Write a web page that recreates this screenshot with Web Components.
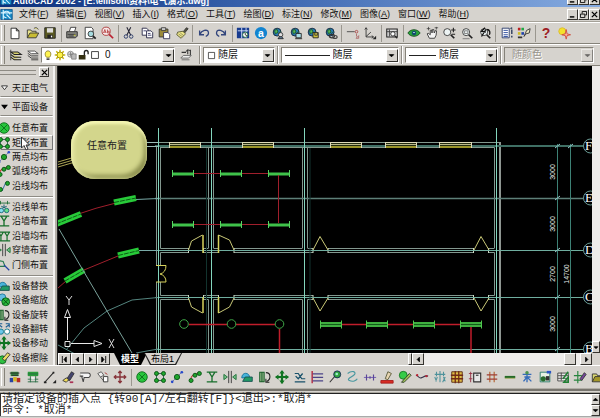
<!DOCTYPE html>
<html lang="zh-CN">
<head>
<meta charset="utf-8">
<title>AutoCAD 2002</title>
<style>
html, body { margin: 0; height: 100%; }
body { font: 9px/12px "Liberation Sans", "Noto Sans CJK SC", sans-serif; color: #111; background: #d6d3ce; overflow: hidden;
  --face: #d6d3ce; --light: #fff; --shade: #858279; --dark: #35332f; }
</style>
</head>
<body>
<cad-app></cad-app>
<script>
const G = '#1fa52c', DG = '#064f12';
const dot = (x, y, r = 2.3) => `<circle cx="${x}" cy="${y}" r="${r}" fill="${G}" stroke="${DG}"/>`;
const path = (d, c = '#222', w = 1, f = 'none') => `<path d="${d}" stroke="${c}" stroke-width="${w}" fill="${f}"/>`;
const globe = '<circle cx="7" cy="7" r="4.5" fill="#2878b8" stroke="#123"/>' + path('M4 5l3-1 1 3-3 2zM8 9l3-3', '#1c5b2b', 1, '#58b858');
const lens = '<circle cx="7" cy="7" r="4" fill="#edf4f4" stroke="#333"/>' + path('M10 10l4 4', '#222', 2);
const ICONS = {
  app: '<rect x="1" y="2" width="14" height="12" fill="#1688c4" stroke="#0a4e88"/>' + path('M4 2v12M1 6h14M8 12a4 4 0 1 1 4-4M8 8l5 5', '#d8f4ff', 1.4),
  new: path('M3.5 2.5h6l3 3v9h-9zM9.500 2.500v3h3', '#222', 1, '#fff'),
  open: path('M1.500 13.500v-9h4l1 1.500h5v2M9 3c2-2 4-1 5 1', '#333', 1, '#e9e38c') + path('M1.500 13.500l3-5.500h10l-3 5.500z', '#333', 1, '#c8bc34'),
  save: path('M2 2h12v12H2z', '#222', 1, '#5b5a22') + '<path d="M4.500 2.500h7v5h-7z" fill="#dedede"/><path d="M5 10h6v4H5z" fill="#222"/><path d="M9 11h1.500v2H9z" fill="#fff"/>',
  print: path('M5 6l1.500-4.500h6L11 6', '#333', 1, '#fff') + path('M2 6.500h12v5l-2 2H2z', '#222', 1, '#8c8c86') + path('M3 9.500h9M4 11.500h6', '#333') + '<path d="M10 10h2v1h-2z" fill="#dd2"/>',
  preview: path('M2.500 1.500h7l2 2v11h-9z', '#333', 1, '#fff') + '<circle cx="9" cy="9" r="3.200" fill="#a7dce0" stroke="#333"/>' + path('M11.500 11.500l3 3', '#222', 2),
  find: '<circle cx="7" cy="6" r="4.700" fill="#f7eaea" stroke="#a33"/>' + path('M4 8l1.500-4L7 8M4.500 7h2M8.500 4v4M8.500 6h2v2h-2', '#a22', .8) + path('M10.500 9.500l4.500 4.500', '#b23', 2),
  cut: path('M5.500 1.500l4.500 9M10 1.500l-4.500 9', '#223', 1.200) + '<circle cx="4.500" cy="12" r="2" fill="none" stroke="#236"/><circle cx="10.500" cy="12" r="2" fill="none" stroke="#236"/>',
  copy: path('M2.500 2.500h5l2 2v6h-7z', '#224', 1, '#fff') + path('M7.500 5.500h5l2 2v6h-7z', '#224', 1, '#fff') + path('M9 8.500h3M9 10.500h4M4 5.500h3', '#336'),
  paste: path('M2.500 3.500h10v9h-10z', '#333', 1, '#9a8a3a') + path('M5 2h5v3H5z', '#333', 1, '#ddd') + path('M7.500 7.500h5l2 2v5h-7z', '#335', 1, '#fff'),
  brush: path('M9 7l4-5 2 1-4 5z', '#333', 1, '#554') + path('M3 7l6-1 3 3-5 5-5-4z', '#553', 1, '#eee788') + path('M4 9l4 3M6 8l4 3', '#775', .8),
  undo: path('M3 5v5h5M3.500 9.500C5 5 12 3 13 7c.5 2-1 4-3 5', '#33467d', 1.500),
  redo: path('M13 5v5H8M12.500 9.500C11 5 4 3 3 7c-.5 2 1 4 3 5', '#33467d', 1.500),
  today: '<path d="M1 2h14v12H1z" fill="#183c90"/>' + path('M2 5.500h12M6.500 2v12M11.500 2v12', '#dce8ff') + '<circle cx="10.500" cy="10" r="3" fill="#fff" stroke="#1b6a3b"/>' + path('M10.500 8v2l2 1', '#222'),
  point: '<circle cx="8" cy="8" r="7" fill="#1284d0"/><text x="8" y="12" text-anchor="middle" font-size="12" font-weight="bold" fill="#fff" font-family="Liberation Sans, sans-serif">a</text>',
  meet: globe + '<circle cx="11" cy="10" r="2.500" fill="#ddd" stroke="#333"/>' + path('M8 14.500c1-3 5-3 6 0z', '#222', 1, '#68a'),
  publish: globe + path('M8 8.500h6v5H8z', '#222', 1, '#a9dce5') + path('M7 14.500h8', '#222'),
  etrans: globe + path('M8 7.500h6v6H8z', '#222', 1, '#cfc23a') + path('M10 8v2.500h3V8', '#333'),
  link: globe + '<ellipse cx="9" cy="11.500" rx="3" ry="2" fill="none" stroke="#333" stroke-width="1.300"/><ellipse cx="12.500" cy="12.500" rx="2.500" ry="1.700" fill="none" stroke="#444" stroke-width="1.300"/>',
  track: path('M1 6.500h9', '#444', 1, 'none') + '<circle cx="12" cy="6.500" r="1.500" fill="none" stroke="#a44"/>' + path('M12 9v3M14.500 11v3h-3z', '#a66', 1),
  ucs: path('M3.500 2v10.500H12M3.500 12L9 7M2 4l1.500-2L5 4M10 11l2 1.500L10 14', '#333') + '<path d="M15 11v4h-4z" fill="#222"/>',
  views: path('M2 3.500h12v9H2z', '#222', 1.200, '#ddd') + path('M2 6.500h12M5 4v8', '#333') + '<circle cx="9" cy="9" r="2.500" fill="#fff" stroke="#222"/>' + path('M11 11l3 3', '#222', 1.500),
  orbit: path('M1 8c3-5 11-5 14 0-3 5-11 5-14 0z', '#154d1c', 1, '#28a23a') + '<circle cx="8" cy="8" r="2.500" fill="#134a70"/><path d="M7 7h2v1H7z" fill="#dff"/>',
  pan: path('M5 14L2.500 9l1-1L6 10V5l1.500-.5L8 8l.500-4H10l.500 4L12 5l1.200.5-.5 5L11 14z', '#333', 1, '#f4f4f4') + path('M2 3h4M11 2h4M4 1v4M13 1v3', '#333', .8),
  zoomrt: lens.replace('cx="7"', 'cx="6"') + path('M13 2v5M10.500 4.500h5M11 9.500h4', '#222', 1.200),
  zoomwin: lens + path('M5 5.500h4v3H5zM3 14.500h8', '#777'),
  zoomprev: lens + path('M4 12l5-8M8 2l-4 4 5 1M10 4c4 0 4 4 3 6', '#111', 1.500),
  props: path('M2.500 2.500h8v11h-8z', '#236', 1, '#fff') + path('M4 5h5M4 7.500h5M4 10h5M4 12h5', '#249', 1, 'none') + path('M13.500 4v5M13.500 11v2M12 3l2-1', '#235', 1.500),
  design: '<path d="M1 2h3v3H1z" fill="#b22"/><path d="M5 2h3v3H5z" fill="#2a4"/><path d="M1 7h3v3H1z" fill="#cb2"/><path d="M5 7h3v3H5z" fill="#24a"/><path d="M1 12h5v2H1z" fill="#333"/>' + path('M8 12l3-7 4-2-1 5-4 1z', '#333', 1, '#e9e6c4'),
  help: '<text x="8" y="14" text-anchor="middle" font-size="16" font-weight="bold" fill="#9d1c24" font-family="Liberation Sans, sans-serif">?</text>',
  spark: '<circle cx="6" cy="6" r="4" fill="#f4e22a" stroke="#d8b830"/>' + path('M10.500 4l1 5 4 1-4 1-1 4-1-4-4-1 4-1z', '#cf4b3c', 1, '#ffb098'),
  layers: path('M2 4.500h8l4 3H6zM2 7.500l4 3h8M2 10.500l4 3h8', '#222', 1.200, '#d7d06d') + path('M2 2v12', '#333'),
  layerprev: path('M2 3.500h8l4 3H6z', '#444', 1, '#fff') + path('M2 6l4 3h8M2 8.500l4 3h8M6 13.500h8', '#333'),
  makelayer: path('M2 11.500l3-3h9l-3 3zM3 13.500h9', '#666', 1, '#eee') + path('M3 5h5M10 7V2M8 4l2-2 3 1M13 2v6', '#333', 1.200),
  bulb: path('M6 11C3 8 4 2.500 8 2.500S13 8 10 11z', '#776a14', 1, '#fff451') + path('M6 13.500h4', '#333', 2),
  sun: path('M8 1v14M1 8h14M3 3l10 10M13 3L3 13', '#cab60e', 2) + '<circle cx="8" cy="8" r="4" fill="#fff34a" stroke="#8b7b00"/>',
  freeze: '<circle cx="6" cy="7" r="4" fill="#ddd" stroke="#777"/><path d="M7.500 6.500h6v7h-6z" fill="#bbb" stroke="#777"/>' + path('M6 4v6M3 7h6', '#777'),
  unlock: path('M8.500 8V4.500a2.500 2.500 0 0 1 5 0V7', '#222', 1.800) + '<path d="M1 8h9v6H1z" fill="#332f12"/>',
  square: path('M2.500 2.500h11v11h-11z', '#222', 1.300, '#fff'),
  equip: '<path d="M3 2h9v5H3z" fill="#398c45"/><path d="M2 9h4v5H2z" fill="#2743a2"/><path d="M6 8h4v5H6z" fill="#d5b724"/><path d="M10 9h4v5h-4z" fill="#b62a25"/>' + path('M2 3.500h11M4 6h8', '#222'),
  table: '<path d="M2 2h12v5H2z" fill="#2b9c3b"/>' + path('M2 4.500h12M2 10.500h12M2 13.500h12M5 7v7M11 7v7', '#276c43') + '<path d="M6 8h4v3H6z" fill="#eee"/>',
  line: path('M2 14L12 3', '#222', 1.200) + '<path d="M1 13h3v2H1zM11 2h2v2h-2z" fill="#222"/><path d="M15 11v4h-4z" fill="#222"/>',
  eraser: path('M6 11l6-9 3 2-5 8z', '#333', 1, '#44446e') + path('M2 12l4-3 3 2-3 3z', '#333', 1, '#f1dc59') + '<path d="M10 13h4v2h-4z" fill="#a35"/>',
  flag: path('M2.500 3.500h9c4 0 3 6-1 5H7l-1 5-2-7M2 7h4', '#444', 1.200, '#f5f5f5'),
  move2: path('M2 4l4-2 3 4-4 2zM5 8l5 6', '#555', 1, '#eee') + path('M8.500 7.500h5v6h-5z', '#333', 1, '#fff') + path('M10 3l3 2', '#a33'),
  movered: path('M8 1.500v13M1.500 8h13M6 3.500l2-2 2 2M6 12.500l2 2 2-2M3.500 6l-2 2 2 2M12.500 6l2 2-2 2', '#87343a', 1.600),
  any: '<circle cx="8" cy="8" r="6" fill="#27c53c" stroke="#0b6a1a"/>' + path('M4 4l8 8M12 4l-8 8', '#0b6a1a'),
  rect: path('M4 4h8v8H4z', '#254') + dot(4, 4) + dot(12, 4) + dot(4, 12) + dot(12, 12),
  two: path('M3 13L13 3', '#67a', 1, 'none') + dot(8, 8, 3) + '<circle cx="13.500" cy="2.500" r="1.500" fill="#2547cb"/><circle cx="2.500" cy="13.500" r="1.500" fill="#2547cb"/>',
  arc: path('M3 12C3 6 8 4 13 4', '#b93830', 1.300) + dot(3.500, 12) + dot(8, 6) + dot(13, 4),
  along: path('M2 13h4l4-9h4', '#467aa5', 1.200) + dot(4, 12) + dot(12, 5),
  single: path('M1 3.500h14M4 1v4M12 1v4', '#1d6b35') + path('M8 5v4M5 7l3 2 3-2', '#267', 1.200) + '<circle cx="5" cy="12" r="2.500" fill="#8de" stroke="#167"/><circle cx="11" cy="12" r="2.500" fill="#6d8" stroke="#167"/>',
  wall: path('M2 2.500h12M5 3l3 5 3-5M8 8v5M2 13.500h12', '#166f2b', 1.500),
  wallavg: path('M1 3.500h14M2 4l2.500 4L7 4M9 4l2.500 4L14 4M4.500 8v5M11.500 8v5M1 13.500h14', '#166f2b', 1.400),
  through: path('M6.500 1v14M9.500 1v14', '#333') + path('M1 5l4 3-4 3zM15 5l-4 3 4 3z', '#176e32', 1, '#7ac18b'),
  door: path('M2 3l5 1 2 5M1 9.500h8', '#277b50', 1.300) + path('M8 8l6 6', '#2342a4', 1.500),
  replace: path('M2 9c0-7 9-7 9 0z', '#157199', 1, '#48b4da') + path('M6 8h8v5H3z', '#174e50', 1, '#219b66'),
  scale: '<circle cx="6" cy="5" r="4" fill="#62bce2" stroke="#16759b"/><circle cx="10" cy="10" r="4.500" fill="#27b53a" stroke="#095918"/>' + path('M7 7l6 6M13 7l-6 6', DG),
  rotate: path('M2 2.500h5v11H2zM4.500 3v10', '#155c27', 1.200, '#9bbd90') + path('M9 3c6 0 6 8 1 10M9 10v4h4', '#222', 1.200),
  flip: path('M2 3l4 3M2 6V2h4M14 3l-4 3M14 6V2h-4', '#1d5f94', 1.300) + '<circle cx="4.500" cy="11" r="3" fill="#6bc7ea" stroke="#178"/><circle cx="11.500" cy="11" r="3" fill="#fff" stroke="#178"/>',
  move: path('M8 1v14M1 8h14', '#107422', 2.500) + '<path d="M5 4l3-4 3 4zM5 12l3 4 3-4zM4 5L0 8l4 3zM12 5l4 3-4 3z" fill="#107422"/>',
  wipe: '<circle cx="6" cy="10" r="4.500" fill="#2fc042" stroke="#0b6119"/>' + path('M6 9l6-7 3 2-6 7z', '#333', 1, '#e8da63'),
  lift: path('M2 13.500h12M2 4h4l4 6h4M3 7l3 3 5-6', '#17506a', 1.400),
  bus: path('M2.500 1v14', '#b83246', 1.700) + path('M3 4.500h12M3 8.500h12M3 12.500h12', '#4b4488', 1.300),
  pin: path('M2 14l6-7', '#333', 1.200) + '<circle cx="10.500" cy="5" r="4" fill="#30a43d" stroke="#125"/><circle cx="10" cy="4.500" r="1.500" fill="#9ec"/>',
  wave: path('M3 4c5-4 10-2 8 1S1 10 5 12s8 0 9-2', '#4998a0', 1.300),
  cross: path('M1 8.500h14', '#7a65b4', 1.200) + path('M4 5v7M12 5v7M8 7v3', '#5a4698', 1.300),
  pen: path('M1 12h14v3H1z', '#a71b1b', 1, '#d82c23') + path('M6 10l3-8 4 2-4 7z', '#553', 1, '#e6d3b0'),
  edit: '<circle cx="6" cy="6" r="4.500" fill="#35cc48" stroke="#187524"/>' + path('M4 14l9-10 2 2L7 14z', '#2d3c28', 1, '#a3c659'),
  wire: path('M1 6c3 0 3 4 6 3s4-3 8-2', '#343048', 1.300) + '<circle cx="2.500" cy="6" r="1.300" fill="#b23"/><circle cx="13" cy="7" r="1.300" fill="#b23"/>',
  tree: path('M2 5h12M4 2v5M8 1v13M12 2v5M2 8l2 5M5 8l-2 5M12 8l2 5M14 8l-3 6', '#4f929b', 1.200),
  grid: '<path d="M2 2h12v12H2z" fill="#e0bc45" stroke="#54270e"/>' + path('M6 1v14M10 1v14M1 6h14M1 10h14', '#712b15', 1.500),
  panel: path('M1 4h4M3 2v12M1 10h4', '#963044') + path('M6.500 3.500h8v10h-8z', '#333', 1.300, '#e8e8e8') + path('M9 6h3', '#333', 1.300),
  hash: path('M5.500 2v12M10.500 2v12', '#b6693a', 1.400) + path('M2 5.500h12M2 10.500h12', '#a03f36', 1.400),
  dash: path('M2 8h12', '#256b26', 2.500) + path('M2 9.500h12', '#a5ac62'),
  person: path('M8 2v12M3 5h10M5 8h7M4 13l4-5 5 5', '#356bba', 1.500) + '<circle cx="8" cy="3" r="2" fill="#4d944e"/>',
  pic: path('M2.500 2.500h11v11h-11z', '#276', 1, '#e7f2e4') + '<circle cx="6" cy="10" r="3" fill="#286c2e"/><path d="M9 7h4v5H9z" fill="#333"/><path d="M10 1h5v3h-5z" fill="#2b55c5"/>',
  sheet: path('M2 3.500h12v9H2zM2 6.500h12M2 9.500h12M6 3v9', '#444', 1, '#e8e8e8') + path('M8 10l6-8M9 14h5V8z', '#208033', 1.700),
  mark: path('M5.500 1v14M1 6.500h9M1 11.500h9', '#27843e', 1.300) + path('M8 10l5-7 2 2-5 7z', '#333', 1, '#75469b'),
  folder: path('M1.500 13.500v-9h5l1 2h6', '#333', 1, '#d9d570') + path('M1.500 13.500l3-6h11l-3 6z', '#333', 1, '#a39628')
};

function define(name, html, setup) {
  const tpl = document.createElement('template');
  tpl.innerHTML = html;
  customElements.define(name, class extends HTMLElement {
    connectedCallback() {
      if (this.shadowRoot) return;
      const root = this.attachShadow({ mode: 'open' });
      root.append(tpl.content.cloneNode(true));
      if (setup) setup(this, root);
    }
  });
}

define('cad-icon', `<style>:host{display:block;flex:none;width:var(--size,14px);height:var(--size,14px)}svg{display:block;width:100%;height:100%}</style><svg viewBox="0 0 16 16" aria-hidden="true"></svg>`,
  (el, root) => { root.querySelector('svg').innerHTML = ICONS[el.getAttribute('name')]; });

define('cad-button', `<style>:host{display:block;flex:none}
button{display:flex;box-sizing:border-box;width:100%;height:100%;margin:0;padding:0;align-items:center;justify-content:center;border:1px solid;border-color:var(--light) var(--dark) var(--dark) var(--light);background:var(--face);color:#000}
svg{display:block;width:7px;height:7px}</style><button><svg viewBox="0 0 8 8"><path fill="none" stroke="#000"/></svg></button>`,
  (el, root) => {
    const shapes = {
      left: 'M5 1.500L2.500 4 5 6.500z', right: 'M3 1.500L5.500 4 3 6.500z', up: 'M1.500 5L4 2.500 6.500 5z', down: 'M1.500 3L4 5.500 6.500 3z',
      first: 'M1.500 0v8M6 1L3.500 4 6 7z', last: 'M6.500 0v8M2 1l2.500 3L2 7z', min: 'M1 6.500h5M1 7h5', restore: 'M2.500 3V.5h5v4H6M.5 3.500h5v4h-5z', close: 'M1 1l6 6M7 1L1 7'
    };
    const k = el.getAttribute('kind'), p = root.querySelector('path');
    if (shapes[k]) p.setAttribute('d', shapes[k]);
    if (['left', 'right', 'up', 'down', 'first', 'last'].includes(k)) p.setAttribute('fill', '#000');
    if (k === 'close') p.setAttribute('stroke-width', '1.5');
    root.querySelector('button').setAttribute('aria-label', k);
  });

define('cad-title', `<style>:host{display:flex;align-items:flex-end;height:7px;overflow:hidden;flex:none;background:linear-gradient(90deg,#0c2f7c,#3c66b0 45%,#86abe0);color:#fff}
cad-icon{--size:12px;margin-bottom:1px}
h1{margin:0 auto 0 1px;font:bold 9px/12px "Liberation Sans","Noto Sans CJK SC",sans-serif;white-space:nowrap}
cad-button{width:11px;height:11px;margin-bottom:2px}</style>
<cad-icon name="app"></cad-icon><h1>AutoCAD 2002 - [E:\\ellison\\资料\\电气演示.dwg]</h1>
<cad-button kind="min"></cad-button><cad-button kind="restore"></cad-button><cad-button kind="close"></cad-button>`);

define('cad-menu', `<style>:host{display:flex;align-items:center;box-sizing:border-box;height:15px;flex:none;border-bottom:1px solid #a5a198}
cad-icon{--size:13px}
nav{display:flex;gap:8px;margin:0 auto 0 6px}
button{border:0;padding:0;margin:0;background:none;font:inherit;color:inherit;white-space:nowrap}
cad-button{width:11px;height:11px}</style><cad-icon name="app"></cad-icon><nav></nav>
<cad-button kind="min"></cad-button><cad-button kind="restore"></cad-button><cad-button kind="close"></cad-button>`,
  (el, root) => {
    root.querySelector('nav').innerHTML = '文件F 编辑E 视图V 插入I 格式O 工具T 绘图D 标注N 修改M 图像A 窗口W 帮助H'.split(' ')
      .map(s => `<button>${s.slice(0, 2)}(<u>${s[2]}</u>)</button>`).join('');
  });

define('cad-toolbar', `<style>:host{display:flex;align-items:center;box-sizing:border-box;flex:none;height:22px;border-top:1px solid var(--light);border-bottom:1px solid var(--shade);padding-left:1px;overflow:hidden}
.grip{flex:none;width:2px;align-self:stretch;margin:2px 2px 2px 0;border-left:1px solid var(--light);border-right:1px solid var(--shade)}
.row{display:flex;flex:1;align-items:center;justify-content:space-between;margin-right:var(--end,0)}
button{display:flex;justify-content:center;width:16px;flex:none;border:0;padding:0;background:none}
i{flex:none;width:1px;height:17px;margin:0 1px;background:#9a978f}</style><span class="grip"></span><div class="row"></div>`,
  (el, root) => {
    root.querySelector('.row').innerHTML = el.getAttribute('tools').split(' ')
      .map(t => t === '|' ? '<i></i>' : `<button aria-label="${t}"><cad-icon name="${t}"></cad-icon></button>`).join('');
  });

define('cad-combo', `<style>:host{display:grid;min-width:0;height:16px;box-sizing:border-box;border:1px solid;border-color:var(--shade) var(--light) var(--light) var(--shade);background:#fff;font-size:10px}
:host([disabled]){background:var(--face);color:#98958d;text-shadow:1px 1px #fff}
select,.over{grid-area:1/1;min-width:0}
select{appearance:none;border:0;margin:0;background:none;font:inherit;line-height:12px;color:inherit;opacity:1;padding:0 14px 0 var(--pad,5px);text-shadow:inherit}
.over{display:flex;align-items:center;pointer-events:none;z-index:1}
::slotted(*){flex:none}
cad-button{width:12px;height:13px;margin-left:auto}
:host([disabled]) cad-button{opacity:.5}</style><select></select><div class="over"><slot></slot><cad-button kind="down"></cad-button></div>`,
  (el, root) => {
    const s = root.querySelector('select');
    s.add(new Option(el.getAttribute('value')));
    s.setAttribute('aria-label', el.getAttribute('label'));
    s.disabled = el.hasAttribute('disabled');
  });

define('cad-properties', `<style>:host{display:flex;align-items:center;box-sizing:border-box;flex:none;height:22px;padding:0 6px 0 1px;border-top:1px solid var(--light);border-bottom:1px solid var(--shade)}
.grip{flex:none;width:2px;height:18px;margin-right:2px;border-left:1px solid var(--light);border-right:1px solid var(--shade)}
button{flex:none;width:17px;display:flex;justify-content:center;border:0;padding:0;background:none}
.sep{flex:none;width:1px;height:18px;margin:0 2px;background:#8f8c85;border-right:1px solid #fff}
cad-icon{--size:14px}cad-combo cad-icon{--size:12px}
.mk{width:22px}
.line{height:1px;background:#222;margin-left:3px}</style>
<span class="grip"></span><button aria-label="图层"><cad-icon name="layers"></cad-icon></button><button aria-label="上一图层"><cad-icon name="layerprev"></cad-icon></button>
<cad-combo label="图层" value="0" style="flex:135 1 0;--pad:63px"><cad-icon name="bulb"></cad-icon><cad-icon name="sun"></cad-icon><cad-icon name="freeze"></cad-icon><cad-icon name="unlock"></cad-icon><cad-icon name="square" style="--size:10px"></cad-icon></cad-combo>
<button class="mk" aria-label="置为当前"><cad-icon name="makelayer"></cad-icon></button><span class="sep"></span>
<cad-combo label="颜色" value="随层" style="flex:71 1 0;--pad:14px"><cad-icon name="square" style="--size:9px;margin-left:3px"></cad-icon></cad-combo><span class="sep"></span>
<cad-combo label="线型" value="随层" style="flex:119 1 0;--pad:51px"><span class="line" style="width:45px"></span></cad-combo><span class="sep"></span>
<cad-combo label="线宽" value="随层" style="flex:93 1 0;--pad:33px"><span class="line" style="width:27px"></span></cad-combo><span class="sep"></span>
<cad-combo label="打印样式" value="随颜色" disabled style="flex:90 1 0;--pad:7px"></cad-combo>`);

define('cad-palette', `<style>:host{display:flex;flex-direction:column;box-sizing:border-box;flex:none;width:58px;padding-right:5px;min-height:0;overflow:hidden;box-shadow:inset -1px 0 #222,inset -3px 0 #b2aea6,inset -5px 0 #f2f1ef;font-size:9px}
header{display:flex;align-items:center;gap:3px;height:12px;padding:0 4px 0 0;flex:none}
header span{flex:1;height:3px;border:solid #8e8b84;border-width:1px 0}
header cad-button{width:10px;height:10px}
button{position:relative;display:flex;align-items:center;gap:1px;margin:0;padding:0;border:1px solid transparent;background:none;font:inherit;line-height:12px;color:inherit;white-space:nowrap}
.head{height:19px;flex:none;border-bottom:1px solid #8e8b84;box-shadow:0 1px #fff;gap:4px;padding-left:0;box-sizing:border-box}
.head svg{width:7px;height:6px;flex:none}
.group{display:flex;flex-direction:column;min-height:0}
.group button{flex:1;min-height:0;box-sizing:border-box}
.group cad-icon{margin-left:-4px}
.hot{border-color:#fff #777 #777 #fff}
.pointer{position:absolute;left:18px;top:0;width:11px;height:16px;z-index:2}
hr{flex:none;box-sizing:border-box;width:100%;height:2px;margin:3px 0 2px;border:0;border-top:1px solid #8e8b84;border-bottom:1px solid #fff}</style>
<header><span></span><cad-button kind="close"></cad-button></header>
<button class="head"><svg viewBox="0 0 8 7"><path d="M.500 1h7L4 5.500z" fill="#fff" stroke="#222"/></svg>天正电气</button>
<button class="head"><svg viewBox="0 0 8 7"><path d="M0 1h8L4 6z"/></svg>平面设备</button>
<div class="group" style="flex:5;margin-top:5px"></div><hr><div class="group" style="flex:5"></div><hr><div class="group" style="flex:6"></div>`,
  (el, root) => {
    const sets = [
      [['any', '任意布置'], ['rect', '矩形布置'], ['two', '两点均布'], ['arc', '弧线均布'], ['along', '沿线均布']],
      [['single', '沿线单布'], ['wall', '沿墙布置'], ['wallavg', '沿墙均布'], ['through', '穿墙布置'], ['door', '门侧布置']],
      [['replace', '设备替换'], ['scale', '设备缩放'], ['rotate', '设备旋转'], ['flip', '设备翻转'], ['move', '设备移动'], ['wipe', '设备擦除']]
    ];
    const pointer = '<svg class="pointer" viewBox="0 0 11 16"><path d="M2.500 1v11l2.500-2.500 2 4.500 2-1-2-4h3.500z" fill="#fff" stroke="#333"/></svg>';
    root.querySelectorAll('.group').forEach((g, i) => {
      g.innerHTML = sets[i].map(([k, t]) => `<button class="${k === 'rect' ? 'hot' : ''}"><cad-icon name="${k}"></cad-icon>${t}${k === 'rect' ? pointer : ''}</button>`).join('');
    });
  });

define('cad-balloon', `<style>:host{display:flex;align-items:center;justify-content:center;box-sizing:border-box;width:76px;height:58px;padding-right:4px;padding-bottom:8px;border-radius:24px;background:#d3d68c;box-shadow:inset 0 3px 3px #f4f6b4,inset 3px 0 4px #e6e9a4,inset -3px -4px 4px #8b8e4e;color:#222;font-size:10px;white-space:nowrap}</style><slot></slot>`);

define('cad-drawing', `<style>:host{display:block;position:relative;flex:1;min-height:0;overflow:hidden;background:#000}
svg{display:block;width:100%;height:100%}
cad-balloon{position:absolute;left:13px;top:55px}
text{font-family:"Liberation Sans",sans-serif}</style>
<svg fill="none"><g id="plan" transform="translate(-58 -66)"></g></svg><cad-balloon>任意布置</cad-balloon>`,
  (el, root) => {
    const L = (d, c, w = 1) => `<path d="${d}" stroke="${c}" stroke-width="${w}"/>`;
    const AX = '#6fae9f', W = '#83988f', T = '#3f6f64', R = '#a01f2c', Y = '#c9c877', GR = '#3fc24a';
    let s = '';
    s += L('M154 142.500H500M160 147.500H494.500M208.500 147.500V248M213.500 147.500V248M302.500 147.500V248M307.500 147.500V248M160.500 147.500V248.500M156.500 147V265M494.500 147.500V248', W);
    s += L('M500 142V353', '#8f9792', 2);
    s += L('M160.500 248.500H188M203.500 248.500H208.500M213.500 248.500H218M234 248.500H302.500M307.500 248.500H313M328 248.500H473.500M488.500 248.500H494.500', W);
    s += L('M160.500 265V252.500H188M203.500 252.500H218M234 252.500H313M328 252.500H473.500M488.500 252.500H494.500V295.500H488.500M473.500 295.500H328M313 295.500H234M218 295.500H203.500M188 295.500H160.500V282', W);
    s += L('M156.500 282V353M160.500 353V299.500H188M203.500 299.500H208.500V353M213.500 353V299.500H218M234 299.500H302.500V353M307.500 353V299.500H313M328 299.500H473.500M488.500 299.500H494.500V353', W);
    s += L('M188.500 248v5M203.500 248v5M218.500 248v5M234 248v5M313 248v5M328 248v5M473.500 248v5M488.500 248v5M188.500 295v5M203.500 295v5M218.500 295v5M234 295v5M313 295v5M328 295v5M473.500 295v5M488.500 295v5', '#cfd8c4');
    s += L('M155 146H583', T, 2) + L('M155 198.500H583', '#5d7f78', 1.500) + L('M155 250.500H583M155 297.500H583M155 349.500H583', AX);
    s += L('M158.500 128V353M211.500 128V353M304.500 128V353M496.500 128V353', '#83d5bd') + L('M206.500 148V353M310 148V353', '#12332e');
    s += L('M557.500 144V353M570.500 144V353', '#3d8175') + L('M555 148l5-4M555 200l5-4M555 252l5-4M555 299l5-4M555 351l5-4M568 148l5-4', '#9cc');
    for (const [a, b] of [[169, 200], [242, 273], [330, 361], [385, 416], [439, 471]])
      s += `<path d="M${a} 142h${b - a}v6h-${b - a}z" fill="#222b10"/>` + L(`M${a} 144.500H${b}`, '#bcb98a') + L(`M${a} 147H${b}`, '#9a942a', 2) + L(`M${a}.500 142V148M${b}.500 142V148M${a} 142.500H${b}`, '#ddd9b8');
    s += L('M203 235V253M218.500 235V253M203 297V313M218.500 297V313', '#d6d25c', 1.500);
    s += L('M188.500 250l3-9 11-6M218.500 235l11 5 4.500 10M188.500 298l3 9 11 6M218.500 313l11-6 4.500-9', Y);
    for (const x of [313, 474]) s += L(`M${x} 250l7-13.500 8 13.500M${x} 298l7 13 8-13`, Y);
    s += L('M156 265.500h10q0 7-6 8.500 6 1.500 6 8h-10', '#d6d25c');
    const tube = (x, y, h) => L(`M${x} ${y}h21`, GR, h) + L(`M${x}.500 ${y - 4}v7M${x + 21}.500 ${y - 4}v7`, '#58d463');
    for (const y of [174, 225]) { s += L(`M193 ${y - .5}H268`, R); for (const x of [172, 220, 268]) s += tube(x, y, 3); }
    s += L('M278.500 175V223', R);
    s += L('M189 324.500H227M236 324.500H275', '#c01d2b', 1.500) + L('M279.500 329V353M471 326V353M341 324.500H461', '#c01d2b', 1.500);
    for (const x of [184, 231.5, 279.5]) s += `<circle cx="${x}" cy="324" r="4.300" stroke="#3fa848"/>`;
    for (const x of [320, 366, 413, 460]) s += L(`M${x} 324.500h21`, '#3fae3f', 5) + L(`M${x} 324.500h21`, '#125a1a') + L(`M${x}.500 320.500v8M${x + 21}.500 320.500v8`, '#50c850');
    // curved wing on the left
    s += L('M58 162l17-5M58 164.500l17-5M58 167l17-5', '#aaa353') + L('M146 142.500h12M146 146.500h12', '#9cbcb7');
    s += L('M58 222Q95 206 136 199', R) + L('M136 199.500L158 198.500M139 250.500H158', '#79aaa7');
    s += L('M58 288L66 281 84 270 118 256', R);
    const bar = (x1, y1, x2, y2) => L(`M${x1} ${y1}L${x2} ${y2}`, '#28ca39', 6) + `<path d="M${x1} ${y1}L${x2} ${y2}" stroke="#0c5b15" stroke-dasharray="5 1"/>`;
    s += bar(56, 224, 81, 214) + bar(114, 202.5, 136, 198) + bar(65, 281, 84, 270) + bar(118, 255.5, 139, 250.5);
    s += L('M66 350L84 328 107 311 132 300 158 297.500M58 345l17 9M136 353l22-4', '#54857f') + L('M59 229L84 272 107 311 132 353', '#7aa29b');
    // coordinate system marker
    s += L('M67.500 340V317M71 343.500H94M65 341.500h5v5h-5zM64.500 317.500l3-8 3 8zM94 340.500l8 3-8 3z', '#e8e8e8') + L('M66 296l3 4 3-4M69 300v5M109 339l5 9M114 339l-5 9', '#ddd');
    const label = (x, y, t) => `<text transform="translate(${x} ${y}) rotate(-90)" text-anchor="middle" font-size="7" fill="#e8efec">${t}</text>`;
    s += label(555, 172, '3000') + label(555, 224, '3000') + label(555, 274, '2700') + label(569, 274, '14700') + label(555, 324, '3000');
    for (const [c, y] of [['F', 146], ['E', 198], ['D', 250], ['C', 297], ['B', 349]])
      s += `<circle cx="590.500" cy="${y}" r="7" fill="#000" stroke="#6b9c95"/><text x="585" y="${y + 4}" font-size="13" fill="#fff" style="font-family:'Liberation Serif',serif">${c}</text>`;
    root.querySelector('#plan').innerHTML = s;
  });

define('cad-sheets', `<style>:host{display:flex;align-items:stretch;flex:none;height:12px;overflow:hidden;background:var(--face)}
.nav{width:13px}
.tabs{display:flex;margin:0 auto 0 4px}
.tabs button{margin:0 -3px 0 0;padding:0 8px 0 7px;border:0;font:inherit;line-height:12px;background:#222;clip-path:polygon(0 0,100% 0,calc(100% - 6px) 100%,6px 100%)}
.tabs button.on{background:#000;color:#fff;font-weight:bold}
.tabs span{display:block;margin:0 -7px 0 -6px;padding:0 7px 0 6px;background:var(--face);clip-path:polygon(0 0,100% 0,calc(100% - 6px) 11px,6px 11px)}
.split{width:4px}.end{width:12px}
.track{flex:0 0 30%;max-width:156px;display:flex;justify-content:flex-end;padding-right:4px;box-sizing:border-box;background:#eeecea}
.corner{width:8px}</style>
<cad-button class="nav" kind="first"></cad-button><cad-button class="nav" kind="left"></cad-button><cad-button class="nav" kind="right"></cad-button><cad-button class="nav" kind="last"></cad-button>
<div class="tabs"><button class="on">模型</button><button><span>布局1</span></button></div>
<cad-button class="split" kind="split"></cad-button><cad-button class="end" kind="left"></cad-button><div class="track"><cad-button class="end" kind="thumb"></cad-button></div><cad-button class="end" kind="right"></cad-button><span class="corner"></span>`);

define('cad-command', `<style>:host{display:flex;flex:none;box-sizing:border-box;border-top:1px solid #222;border-left:1px solid #333;background:#fff;color:#222}
.log{flex:1;font:11px/11px "Liberation Mono","Noto Sans CJK SC",monospace;white-space:pre;min-width:0;padding-left:1px}
p{margin:0;height:11px}
.bar{width:9px;display:flex;flex-direction:column}.bar cad-button{flex:1;min-height:0}</style>
<div class="log"><p>请指定设备的插入点 {转90[A]/左右翻转[F]}&lt;退出&gt;:*取消*</p><p>命令: *取消*</p></div>
<div class="bar"><cad-button kind="up"></cad-button><cad-button kind="down"></cad-button></div>`);

define('cad-app', `<style>:host{display:flex;flex-direction:column;height:100vh;overflow:hidden;background:var(--face)}
.main{display:flex;flex:1;min-height:0}
.work{display:flex;flex-direction:column;flex:1;min-width:0}
.view{display:flex;flex:1;min-height:0}
.vbar{display:flex;flex-direction:column;justify-content:flex-end;flex:none;width:8px;background:#eeecea}
.vbar cad-button{height:12px}
.wide{--end:-6px;height:24px;border-bottom-color:#b0ada5}
.std{--end:28px}
.divider{flex:none;height:4px;box-sizing:border-box;border-top:2px solid #77746d;border-bottom:1px solid #aaa79f}
.foot{flex:none;height:2px;border-top:1px solid #aaa;box-sizing:border-box}</style>
<cad-title></cad-title><cad-menu></cad-menu>
<cad-toolbar class="std" tools="new open save | print preview find | cut copy paste brush | undo redo | today point meet publish etrans link | track ucs | views | orbit pan zoomrt zoomwin zoomprev | props design | help spark"></cad-toolbar>
<cad-properties></cad-properties>
<div class="main"><cad-palette></cad-palette><div class="work"><div class="view"><cad-drawing></cad-drawing><div class="vbar"><cad-button kind="down"></cad-button></div></div><cad-sheets></cad-sheets></div></div>
<cad-toolbar class="wide" tools="equip table line eraser flag move2 movered | any rect two arc wall through replace rotate move lift bus pin wave cross pen edit wire tree grid panel hash dash person pic sheet mark folder"></cad-toolbar>
<div class="divider"></div><cad-command></cad-command><div class="foot"></div>`);
</script>
</body>
</html>
